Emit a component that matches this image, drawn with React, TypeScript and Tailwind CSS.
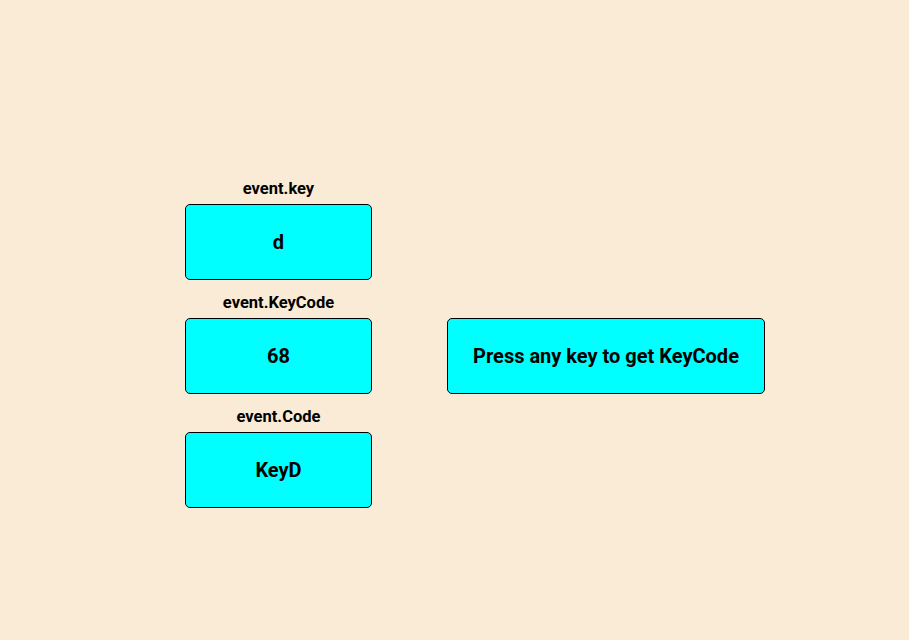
import React from "react"

const fields = [
  { label: "event.key", value: "d" },
  { label: "event.KeyCode", value: "68" },
  { label: "event.Code", value: "KeyD" },
]

export default function App() {
  return (
    <div
      className="min-h-[640px] w-full bg-[#faebd7] text-black"
      style={{ fontFamily: "Roboto, 'Liberation Sans', sans-serif" }}
    >
      <div className="flex items-start pl-[185px] pt-[180px] gap-[75px]">
        {/* Result column */}
        <div className="flex w-[187px] flex-col gap-[14px]">
          {fields.map((f) => (
            <div key={f.label} className="flex flex-col">
              <div className="h-[24px] text-center text-[16.5px] font-bold leading-[17px]">
                {f.label}
              </div>
              <div className="flex h-[76px] items-center justify-center rounded-[5px] border border-black bg-[#00ffff] text-[20px] font-bold">
                {f.value}
              </div>
            </div>
          ))}
        </div>

        {/* Prompt */}
        <div className="mt-[138px] flex h-[76px] w-[318px] items-center justify-center rounded-[5px] border border-black bg-[#00ffff] text-[20px] font-bold">
          Press any key to get KeyCode
        </div>
      </div>
    </div>
  )
}
